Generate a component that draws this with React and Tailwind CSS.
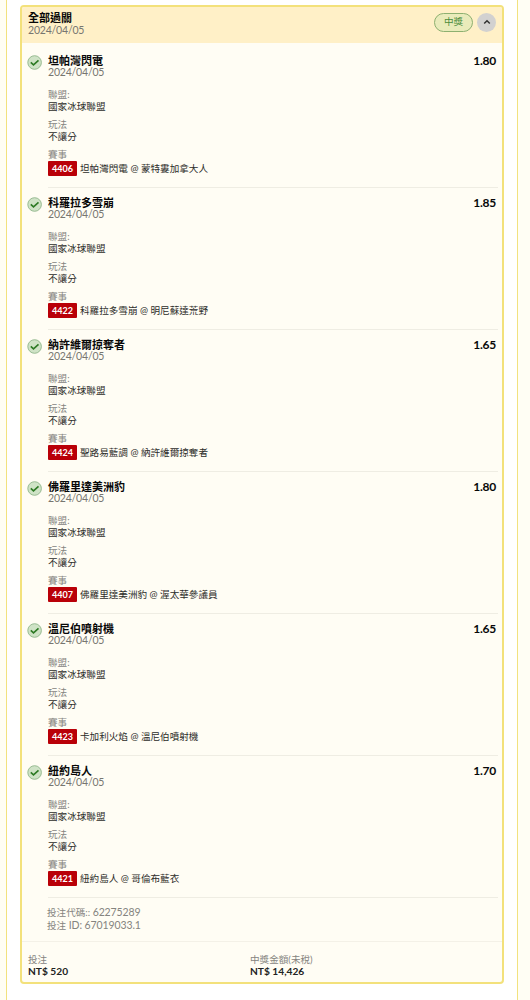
import React from 'react'

const LEGS = [
  { id: '4406', team: '坦帕灣閃電', odds: '1.80', match: '坦帕灣閃電 @ 蒙特婁加拿大人' },
  { id: '4422', team: '科羅拉多雪崩', odds: '1.85', match: '科羅拉多雪崩 @ 明尼蘇達荒野' },
  { id: '4424', team: '納許維爾掠奪者', odds: '1.65', match: '聖路易藍調 @ 納許維爾掠奪者' },
  { id: '4407', team: '佛羅里達美洲豹', odds: '1.80', match: '佛羅里達美洲豹 @ 渥太華參議員' },
  { id: '4423', team: '溫尼伯噴射機', odds: '1.65', match: '卡加利火焰 @ 溫尼伯噴射機' },
  { id: '4421', team: '紐約島人', odds: '1.70', match: '紐約島人 @ 哥倫布藍衣' },
]

function WonIcon() {
  return (
    <svg className="mt-[9px] h-[15px] w-[15px] shrink-0" viewBox="0 0 15 15" fill="none">
      <circle cx="7.6" cy="7.5" r="6.8" fill="#cfe3c6" stroke="#8fb58a" strokeWidth="0.9" />
      <path d="M3.8 7.3l2.7 2.6 5-4.6" stroke="#2d7a24" strokeWidth="1.6" />
    </svg>
  )
}

function Field({ label, value }) {
  return (
    <div className="mb-[6px]">
      <p className="text-[#85847f]">{label}</p>
      <p className="text-[#2c2c29]">{value}</p>
    </div>
  )
}

function Leg({ leg }) {
  return (
    <div className="flex h-[142px] pl-[5px]">
      <WonIcon />
      <div className="ml-[6px] mr-[4px] flex-1 border-b border-[#efede3] pt-[9px]">
        <div className="flex h-[11px] justify-between pr-[2px] text-[11px] font-bold text-[#080808]">
          <h3>{leg.team}</h3>
          <span className="text-[12px] tracking-[-0.25px]">{leg.odds}</span>
        </div>
        <p className="mb-[11px] text-[10.5px] tracking-[-0.2px] text-[#777670]">2024/04/05</p>
        <Field label="聯盟:" value="國家冰球聯盟" />
        <Field label="玩法" value="不讓分" />
        <p className="text-[#85847f]">賽事</p>
        <div className="flex h-[15px] items-center">
          <span className="mr-[3px] flex h-[15px] w-[29px] items-center justify-center rounded-[1px] bg-[#b90008] text-[9px] font-bold text-white">
            {leg.id}
          </span>
          <span className="text-[#2c2c29]">{leg.match}</span>
        </div>
      </div>
    </div>
  )
}

function App() {
  return (
    <div className="h-[1000px] w-[530px] overflow-hidden bg-[#fffef4] px-[6px] font-['Lato','Noto_Sans_CJK_TC',sans-serif] text-[9.6px] leading-[12px]">
      <div className="h-full w-[512px] border-x border-[#f2e27f] bg-white px-[13px] pt-[5px]">
        <div className="h-[979px] w-[484px] overflow-hidden rounded-[4px] border-2 border-[#f3e17b] bg-[#fffdf4]">
          {/* Header */}
          <header className="flex h-[36px] justify-between bg-[#fff0c7] pl-[6px] pr-[6px] pt-[5px]">
            <div>
              <h2 className="text-[11px] font-bold text-[#080808]">全部過關</h2>
              <p className="text-[10.5px] tracking-[-0.2px] text-[#777670]">2024/04/05</p>
            </div>
            <div className="flex h-[20px] items-center gap-[4px]">
              <span className="flex h-[19px] w-[39px] items-center justify-center rounded-full border border-[#8db070] bg-[#e9ebba] text-[9.6px] text-[#4b8b3b]">
                中獎
              </span>
              <button className="flex h-[19px] w-[19px] items-center justify-center rounded-full bg-[#d2d1d0]">
                <svg className="h-[8px] w-[8px]" viewBox="0 0 8 8" fill="none">
                  <path d="M1.2 5.5L4 2.7l2.8 2.8" stroke="#333333" strokeWidth="1.5" />
                </svg>
              </button>
            </div>
          </header>

          {/* Legs */}
          <div className="pt-[3px]">
            {LEGS.map(leg => (
              <Leg key={leg.id} leg={leg} />
            ))}
          </div>

          {/* Ticket codes */}
          <div className="h-[44px] border-b border-[#f4f1e7] pl-[25px] pt-[8px] text-[#85847f]">
            <p>投注代碼:: <span className="text-[10.5px] tracking-[-0.1px]">62275289</span></p>
            <p>投注 <span className="text-[10.5px] tracking-[-0.1px]">ID: 67019033.1</span></p>
          </div>

          {/* Totals */}
          <footer className="flex pl-[6px] pt-[12px]">
            <div className="w-[222px]">
              <p className="h-[11px] text-[#85847f]">投注</p>
              <p className="text-[10.2px] font-bold text-[#222222]">NT$ 520</p>
            </div>
            <div>
              <p className="h-[11px] text-[#85847f]">中獎金額(未稅)</p>
              <p className="text-[10.2px] font-bold text-[#222222]">NT$ 14,426</p>
            </div>
          </footer>
        </div>
      </div>
    </div>
  )
}

export default App
